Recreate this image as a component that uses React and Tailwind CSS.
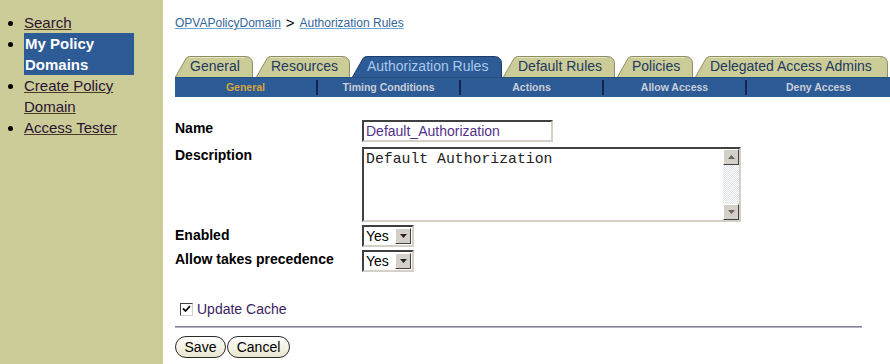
import React from "react";

function Tab({ w, label, active, cls }) {
  const fill = active ? "#2d5b95" : "#cccc99";
  const stroke = active ? "#1d3d6c" : "#8d8d62";
  const h = 21;
  const d = `M0.5,${h} L11,2.5 Q12.2,0.5 14.5,0.5 L${w - 8},0.5 Q${w - 0.5},0.5 ${w - 0.5},8 L${w - 0.5},${h}`;
  return (
    <div className={"relative h-[21px] shrink-0 " + cls}>
      <svg className="absolute inset-0" width={w} height={h} viewBox={`0 0 ${w} ${h}`}>
        <path d={d + " Z"} fill={fill} />
        <path d={d} fill="none" stroke={stroke} strokeWidth="1" />
        {!active && <path d={`M14.5,1.5 L${w - 8},1.5`} stroke="#e4e4c4" strokeWidth="1" />}
      </svg>
      <div
        className={
          "relative pl-[15px] text-[14px] leading-[21px] whitespace-nowrap " +
          (active ? "text-[#a9c8ee]" : "text-[#1d3960]")
        }
      >
        {label}
      </div>
    </div>
  );
}

function SubItem({ label, active, last }) {
  return (
    <div className="flex-1 flex items-center relative h-full">
      <div
        className={
          "flex-1 text-center text-[10.5px] font-bold whitespace-nowrap " +
          (active ? "text-[#d4a43a]" : "text-[#c8ced9]")
        }
      >
        {label}
      </div>
      {!last && <div className="w-[2px] h-[15px] bg-[#17244f]" />}
    </div>
  );
}

function Select() {
  return (
    <div className="w-[52px] h-[22px] flex border-2 border-t-[#404040] border-l-[#404040] border-b-[#d4d0c8] border-r-[#d4d0c8] bg-white">
      <div className="flex-1 pl-[2px] text-[14px] leading-[18px] text-black">Yes</div>
      <div className="w-[16px] h-[16px] mt-px mr-px bg-[#d4d0c8] border border-t-white border-l-white border-b-[#404040] border-r-[#404040] flex items-center justify-center">
        <svg width="7" height="4" viewBox="0 0 7 4">
          <path d="M0,0 L7,0 L3.5,4 Z" fill="#222" />
        </svg>
      </div>
    </div>
  );
}

function ScrollBtn({ up }) {
  return (
    <div className="w-[16px] h-[16px] bg-[#d4d0c8] border border-t-white border-l-white border-b-[#404040] border-r-[#404040] flex items-center justify-center">
      <svg width="7" height="4" viewBox="0 0 7 4">
        {up ? <path d="M0,4 L7,4 L3.5,0 Z" fill="#666" /> : <path d="M0,0 L7,0 L3.5,4 Z" fill="#666" />}
      </svg>
    </div>
  );
}

export default function App() {
  return (
    <div className="w-[890px] h-[364px] flex bg-white font-['Liberation_Sans',Arial,sans-serif] overflow-hidden">
      {/* Sidebar */}
      <div className="w-[163px] h-full bg-[#cccc99] shrink-0">
        <ul className="list-disc pl-[24px] pt-[12px] text-[15px] leading-[21px] text-[#2a1530] marker:text-black">
          <li className="w-[110px]">
            <span className="underline decoration-[#4a3a2a]">Search</span>
          </li>
          <li className="w-[110px] bg-[#2d5b95] text-white font-bold pl-px">My Policy Domains</li>
          <li className="w-[110px]">
            <span className="underline decoration-[#4a3a2a]">Create Policy Domain</span>
          </li>
          <li className="w-[110px]">
            <span className="underline decoration-[#4a3a2a]">Access Tester</span>
          </li>
        </ul>
      </div>

      {/* Main */}
      <div className="flex-1 pl-[12px] pt-[14px]">
        <div className="h-[18px] flex items-center text-[12px] leading-[18px]">
          <span className="text-[#336699] underline decoration-[#6aa6d6]">OPVAPolicyDomain</span>
          <span className="text-[15px] text-black px-[5px] leading-[18px]">&gt;</span>
          <span className="text-[#336699] underline decoration-[#6aa6d6]">Authorization Rules</span>
        </div>

        {/* Tabs */}
        <div className="mt-[24px] flex items-end">
          <Tab w={78} cls="w-[78px]" label="General" />
          <Tab w={94} cls="w-[94px] ml-[3px]" label="Resources" />
          <Tab w={150} cls="w-[150px] ml-[2px]" label="Authorization Rules" active />
          <Tab w={112} cls="w-[112px] ml-px" label="Default Rules" />
          <Tab w={76} cls="w-[76px] ml-[2px]" label="Policies" />
          <Tab w={193} cls="w-[193px] ml-[2px]" label="Delegated Access Admins" />
        </div>
        <div className="h-[20px] w-[715px] bg-[#2d5b95] border-t border-[#27507f] flex items-center">
          <SubItem label="General" active />
          <SubItem label="Timing Conditions" />
          <SubItem label="Actions" />
          <SubItem label="Allow Access" />
          <SubItem label="Deny Access" last />
        </div>

        {/* Form */}
        <div className="mt-[23px] grid grid-cols-[187px_1fr] text-[14px] text-black">
          <div className="font-bold leading-[16px]">Name</div>
          <div className="w-[191px] h-[22px] border-2 border-t-[#404040] border-l-[#404040] border-b-[#d4d0c8] border-r-[#d4d0c8] bg-white pl-[2px] text-[14px] leading-[18px] text-[#55308a]">
            Default_Authorization
          </div>

          <div className="font-bold leading-[16px] mt-[5px]">Description</div>
          <div className="mt-[5px] w-[379px] h-[75px] flex border-2 border-t-[#404040] border-l-[#404040] border-b-[#d4d0c8] border-r-[#d4d0c8] bg-white">
            <div className="flex-1 pl-[2px] pt-[1px] font-['Liberation_Mono','Courier_New',monospace] text-[14.8px] leading-[18px] text-[#222]">
              Default Authorization
            </div>
            <div className="w-[16px] flex flex-col">
              <ScrollBtn up />
              <div className="flex-1 bg-[repeating-conic-gradient(#dfe3e8_0_25%,#ffffff_0_50%)] bg-[length:2px_2px]" />
              <ScrollBtn />
            </div>
          </div>

          <div className="font-bold leading-[16px] mt-[5px]">Enabled</div>
          <div className="mt-[3px]">
            <Select />
          </div>

          <div className="font-bold leading-[16px] mt-[3px] pt-[1px]">Allow takes precedence</div>
          <div className="mt-[3px]">
            <Select />
          </div>
        </div>

        <div className="mt-[29px] h-[16px] flex items-center pl-[5px]">
          <div className="w-[13px] h-[13px] border border-t-[#404040] border-l-[#404040] border-b-[#d4d0c8] border-r-[#d4d0c8] bg-white flex items-center justify-center">
            <svg width="9" height="8" viewBox="0 0 9 8">
              <path d="M1,3.5 L3.5,6 L8,1.2" fill="none" stroke="#111" strokeWidth="1.8" />
            </svg>
          </div>
          <span className="ml-[4px] text-[14px] text-[#3b2363]">Update Cache</span>
        </div>

        <div className="mt-[9px] w-[687px] h-[2px] border-t border-t-[#8a7fa0] border-b border-b-[#b4b4c4]" />

        <div className="mt-[8px] flex">
          <div className="w-[51px] h-[22px] rounded-full border-[1.5px] border-[#2b2b2b] bg-gradient-to-b from-white to-[#e9e7cf] flex items-center justify-center text-[14px] text-black">
            Save
          </div>
          <div className="ml-px w-[63px] h-[22px] rounded-full border-[1.5px] border-[#2b2b2b] bg-gradient-to-b from-white to-[#e9e7cf] flex items-center justify-center text-[14px] text-black">
            Cancel
          </div>
        </div>
      </div>
    </div>
  );
}
